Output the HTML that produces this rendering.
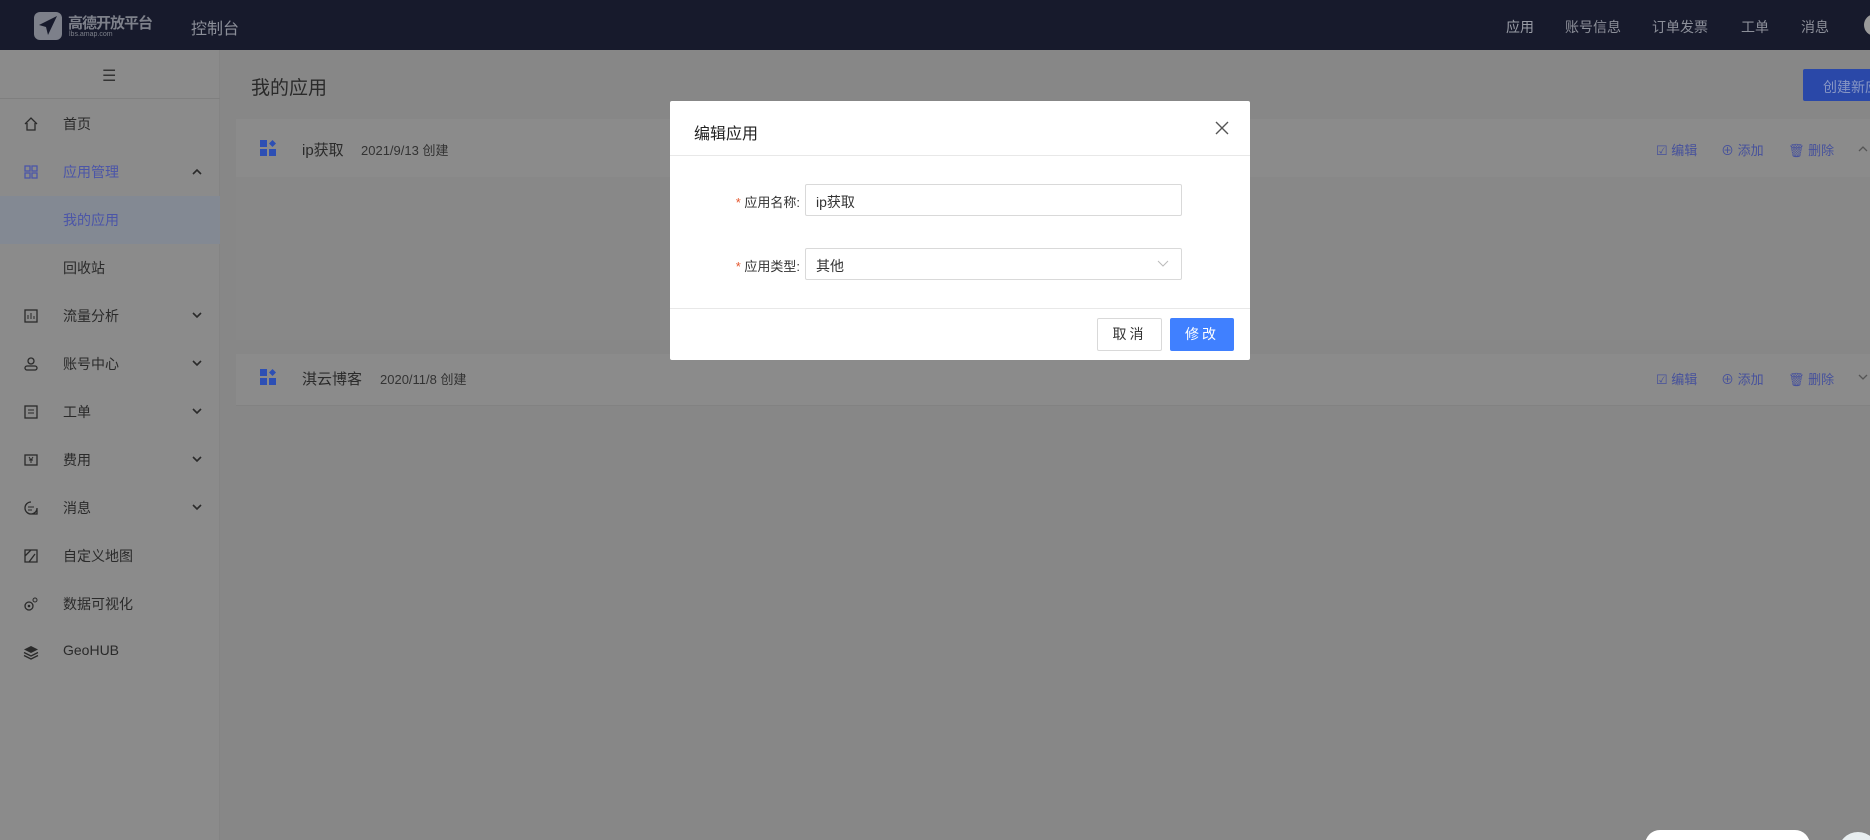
<!DOCTYPE html>
<html><head><meta charset="utf-8"><style>
*{margin:0;padding:0;box-sizing:border-box}
html,body{width:1870px;height:840px;overflow:hidden}
body{background:#878787;font-family:"Liberation Sans","Noto Sans CJK SC",sans-serif;position:relative;color:#2b2b2b}
.top{position:absolute;left:0;top:0;width:1870px;height:50px;background:#171a2c}
.top .nav{position:absolute;top:17px;font-size:14px;color:#8c8f99;white-space:nowrap}
.side{position:absolute;left:0;top:50px;width:220px;height:790px;background:#8b8b8b;border-right:1px solid #848484}
.mi{position:absolute;left:0;width:220px;height:48px;font-size:14px;color:#2a2a2a}
.mi span.t{position:absolute;left:63px;top:14px;white-space:nowrap}
.mi .ic{position:absolute;left:23px;top:16px;width:16px;height:16px}
.mi .ch{position:absolute;left:192px;top:20px;width:10px;height:7px}
.card{position:absolute;left:236px;width:1640px;background:#8a8a8a}
.act{position:absolute;top:0;font-size:13px;color:#46519c;white-space:nowrap}
.modal{position:absolute;left:670px;top:101px;width:580px;height:259px;background:#fff;border-radius:2px}
.lbl{position:absolute;font-size:13px;color:#333;text-align:right;width:130px;left:0;white-space:nowrap}
.inp{position:absolute;left:135px;width:377px;height:32px;border:1px solid #d9d9d9;border-radius:2px;font-size:14px;padding:7px 10px;color:#333}
</style></head><body>
<div class="top">
  <svg style="position:absolute;left:33px;top:11px" width="30" height="30" viewBox="0 0 30 30"><rect x="1" y="1" width="28" height="28" rx="6" fill="#7d808a"/><path d="M24 5 L6 14 L13 16 L15 24 Z" fill="#171a2c"/></svg>
  <div style="position:absolute;left:68px;top:12px;font-size:15px;color:#7d808a;font-weight:bold;letter-spacing:-1px;white-space:nowrap">高德开放平台</div>
  <div style="position:absolute;left:69px;top:31px;font-size:7px;color:#7d808a">lbs.amap.com</div>
  <div style="position:absolute;left:191px;top:15px;font-size:16px;color:#8c8f99">控制台</div>
  <div class="nav" style="left:1506px;color:#9a9da6">应用</div>
  <div class="nav" style="left:1565px">账号信息</div>
  <div class="nav" style="left:1652px">订单发票</div>
  <div class="nav" style="left:1741px">工单</div>
  <div class="nav" style="left:1801px">消息</div>
  <div style="position:absolute;left:1864px;top:14px;width:22px;height:22px;border-radius:50%;background:#9a9a9a"></div>
</div>
<div class="side">
  <div style="position:absolute;left:102px;top:16px;font-size:16px;color:#333">☰</div>
  <div style="position:absolute;left:0;top:48px;width:220px;height:1px;background:#7f7f7f"></div>
  <div class="mi" style="top:50px"><svg class="ic" viewBox="0 0 16 16"><path d="M2 8 L8 2 L14 8 M4 7 V14 H12 V7" fill="none" stroke="#2a2a2a" stroke-width="1.3"/></svg><span class="t">首页</span></div>
  <div class="mi" style="top:98px;color:#4b55a8"><svg class="ic" viewBox="0 0 16 16"><rect x="2" y="2" width="5" height="5" fill="none" stroke="#4b55a8" stroke-width="1.3"/><rect x="9" y="2" width="5" height="5" fill="none" stroke="#4b55a8" stroke-width="1.3"/><rect x="2" y="9" width="5" height="5" fill="none" stroke="#4b55a8" stroke-width="1.3"/><rect x="9" y="9" width="5" height="5" fill="none" stroke="#4b55a8" stroke-width="1.3"/></svg><span class="t">应用管理</span><svg class="ch" viewBox="0 0 10 7"><path d="M1 6 L5 2 L9 6" fill="none" stroke="#2a2a2a" stroke-width="1.6"/></svg></div>
  <div class="mi" style="top:146px;background:#838993;color:#4b55a8"><span class="t">我的应用</span></div>
  <div class="mi" style="top:194px"><span class="t">回收站</span></div>
  <div class="mi" style="top:242px"><svg class="ic" viewBox="0 0 16 16"><rect x="2" y="2" width="12" height="12" fill="none" stroke="#2a2a2a" stroke-width="1.3"/><path d="M5 11 V7 M8 11 V5 M11 11 V8" stroke="#2a2a2a"/></svg><span class="t">流量分析</span><svg class="ch" viewBox="0 0 10 7"><path d="M1 1 L5 5 L9 1" fill="none" stroke="#2a2a2a" stroke-width="1.6"/></svg></div>
  <div class="mi" style="top:290px"><svg class="ic" viewBox="0 0 16 16"><circle cx="8" cy="5" r="3" fill="none" stroke="#2a2a2a" stroke-width="1.3"/><rect x="2" y="10" width="12" height="4" rx="2" fill="none" stroke="#2a2a2a" stroke-width="1.3"/></svg><span class="t">账号中心</span><svg class="ch" viewBox="0 0 10 7"><path d="M1 1 L5 5 L9 1" fill="none" stroke="#2a2a2a" stroke-width="1.6"/></svg></div>
  <div class="mi" style="top:338px"><svg class="ic" viewBox="0 0 16 16"><rect x="2" y="2" width="12" height="12" fill="none" stroke="#2a2a2a" stroke-width="1.3"/><path d="M5 6 H11 M5 9 H11" stroke="#2a2a2a"/></svg><span class="t">工单</span><svg class="ch" viewBox="0 0 10 7"><path d="M1 1 L5 5 L9 1" fill="none" stroke="#2a2a2a" stroke-width="1.6"/></svg></div>
  <div class="mi" style="top:386px"><svg class="ic" viewBox="0 0 16 16"><rect x="2" y="3" width="12" height="10" fill="none" stroke="#2a2a2a" stroke-width="1.3"/><path d="M6 5 L8 8 L10 5 M8 8 V11 M6 8 H10" stroke="#2a2a2a" fill="none"/></svg><span class="t">费用</span><svg class="ch" viewBox="0 0 10 7"><path d="M1 1 L5 5 L9 1" fill="none" stroke="#2a2a2a" stroke-width="1.6"/></svg></div>
  <div class="mi" style="top:434px"><svg class="ic" viewBox="0 0 16 16"><path d="M8 2 A6 6 0 1 0 14 8 V14 H8" fill="none" stroke="#2a2a2a" stroke-width="1.3"/><path d="M5 7 H11 M5 10 H9" stroke="#2a2a2a"/></svg><span class="t">消息</span><svg class="ch" viewBox="0 0 10 7"><path d="M1 1 L5 5 L9 1" fill="none" stroke="#2a2a2a" stroke-width="1.6"/></svg></div>
  <div class="mi" style="top:482px"><svg class="ic" viewBox="0 0 16 16"><path d="M2 2 H14 V14 H2 Z M2 8 L8 2 M6 14 L12 6" fill="none" stroke="#2a2a2a" stroke-width="1.3"/></svg><span class="t">自定义地图</span></div>
  <div class="mi" style="top:530px"><svg class="ic" viewBox="0 0 16 16"><circle cx="6" cy="10" r="4" fill="none" stroke="#2a2a2a" stroke-width="1.3"/><circle cx="6" cy="10" r="1.3" fill="#2a2a2a"/><circle cx="12" cy="4" r="2" fill="none" stroke="#2a2a2a"/></svg><span class="t">数据可视化</span></div>
  <div class="mi" style="top:578px"><svg class="ic" viewBox="0 0 16 16"><path d="M8 2 L15 5.5 L8 9 L1 5.5 Z" fill="#2a2a2a"/><path d="M1 8.5 L8 12 L15 8.5 M1 11.5 L8 15 L15 11.5" fill="none" stroke="#2a2a2a" stroke-width="1.3"/></svg><span class="t">GeoHUB</span></div>
</div>
<div style="position:absolute;left:251px;top:73px;font-size:19px;color:#2a2a2a">我的应用</div>
<div style="position:absolute;left:1803px;top:69px;width:80px;height:32px;background:#2a48a8;border-radius:2px;color:#8796c4;font-size:14px;padding:8px 0 0 20px;white-space:nowrap;overflow:hidden">创建新应用</div>
<div class="card" style="top:119px;height:221px;background:#888">
  <div style="position:absolute;left:0;top:0;width:100%;height:58px;background:#8b8b8b"></div>
</div>
<div class="card" style="top:354px;height:52px;background:#8b8b8b;border-bottom:1px solid #828282"></div>
<svg style="position:absolute;left:260px;top:140px" width="16" height="16" viewBox="0 0 16 16"><rect x="0" y="0" width="7" height="7" fill="#2d4fb4"/><rect x="0" y="9" width="7" height="7" fill="#2d4fb4"/><rect x="9" y="9" width="7" height="7" fill="#2d4fb4"/><path d="M12.5 0 L16 3.5 L12.5 7 L9 3.5Z" fill="#2d4fb4"/></svg>
<div style="position:absolute;left:302px;top:139px;font-size:15px;white-space:nowrap">ip获取</div>
<div style="position:absolute;left:361px;top:140px;font-size:13px;color:#333;white-space:nowrap">2021/9/13 创建</div>
<svg style="position:absolute;left:260px;top:369px" width="16" height="16" viewBox="0 0 16 16"><rect x="0" y="0" width="7" height="7" fill="#2d4fb4"/><rect x="0" y="9" width="7" height="7" fill="#2d4fb4"/><rect x="9" y="9" width="7" height="7" fill="#2d4fb4"/><path d="M12.5 0 L16 3.5 L12.5 7 L9 3.5Z" fill="#2d4fb4"/></svg>
<div style="position:absolute;left:302px;top:368px;font-size:15px;white-space:nowrap">淇云博客</div>
<div style="position:absolute;left:380px;top:369px;font-size:13px;color:#333;white-space:nowrap">2020/11/8 创建</div>
<div style="position:absolute;left:0;top:140px;width:1870px">
  <div class="act" style="left:1656px">☑ 编辑</div><div class="act" style="left:1721px">⊕ 添加</div><div class="act" style="left:1788px">🗑︎ 删除</div><svg style="position:absolute;left:1858px;top:5px" width="10" height="7" viewBox="0 0 10 7"><path d="M1 6 L5 2 L9 6" fill="none" stroke="#555" stroke-width="1.3"/></svg>
</div>
<div style="position:absolute;left:0;top:369px;width:1870px">
  <div class="act" style="left:1656px">☑ 编辑</div><div class="act" style="left:1721px">⊕ 添加</div><div class="act" style="left:1788px">🗑︎ 删除</div><svg style="position:absolute;left:1858px;top:5px" width="10" height="7" viewBox="0 0 10 7"><path d="M1 1 L5 5 L9 1" fill="none" stroke="#555" stroke-width="1.3"/></svg>
</div>
<div style="position:absolute;left:1645px;top:830px;width:165px;height:30px;border-radius:15px;background:#fff"></div>
<div style="position:absolute;left:1838px;top:832px;width:40px;height:40px;border-radius:50%;background:#e8eef0"></div>
<div class="modal">
  <div style="position:absolute;left:24px;top:19px;font-size:16px;color:#222">编辑应用</div>
  <svg style="position:absolute;left:545px;top:20px" width="14" height="14" viewBox="0 0 14 14"><path d="M1 1 L13 13 M13 1 L1 13" stroke="#555" stroke-width="1.4"/></svg>
  <div style="position:absolute;left:0;top:54px;width:580px;height:1px;background:#e8e8e8"></div>
  <div class="lbl" style="top:91px"><span style="color:#e4572e">* </span>应用名称:</div>
  <div class="inp" style="top:83px">ip获取</div>
  <div class="lbl" style="top:155px"><span style="color:#e4572e">* </span>应用类型:</div>
  <div class="inp" style="top:147px">其他<svg style="position:absolute;right:12px;top:11px" width="12" height="8" viewBox="0 0 12 8"><path d="M1 1 L6 6 L11 1" fill="none" stroke="#bbb"/></svg></div>
  <div style="position:absolute;left:0;top:207px;width:580px;height:1px;background:#e8e8e8"></div>
  <div style="position:absolute;left:427px;top:217px;width:65px;height:33px;border:1px solid #d9d9d9;border-radius:2px;font-size:14px;text-align:center;line-height:31px;color:#333;letter-spacing:3px">取消</div>
  <div style="position:absolute;left:500px;top:217px;width:64px;height:33px;background:#4080ff;border-radius:2px;font-size:14px;text-align:center;line-height:33px;color:#fff;letter-spacing:3px">修改</div>
</div>
</body></html>
